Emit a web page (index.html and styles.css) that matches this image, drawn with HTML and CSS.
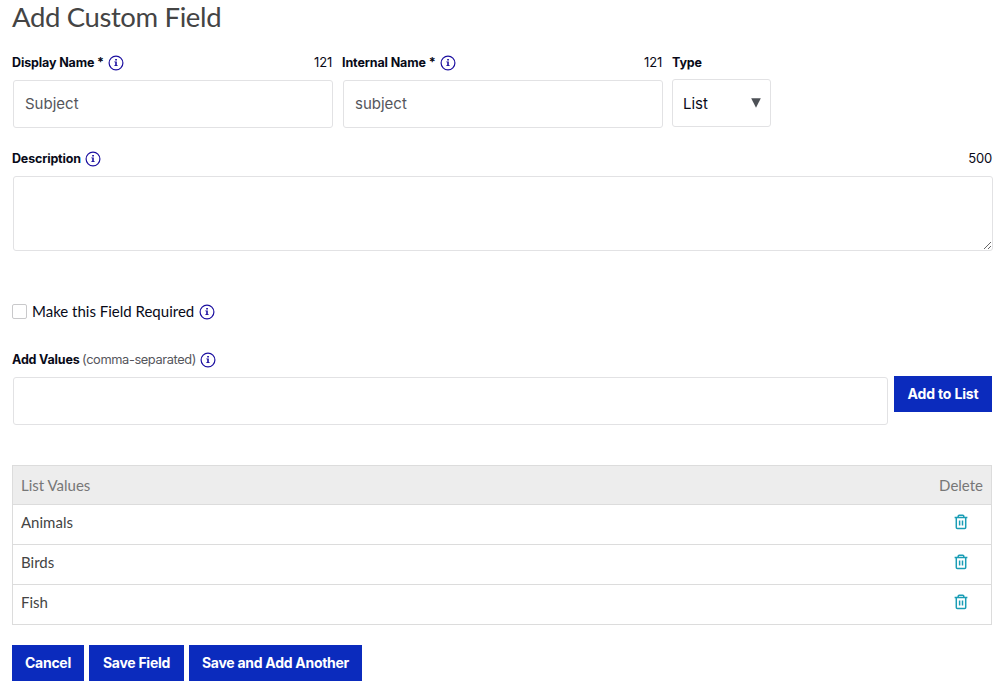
FILE: index.html
```html
<!DOCTYPE html>
<html lang="en">
<head>
<meta charset="utf-8">
<title>Add Custom Field</title>
<link rel="stylesheet" href="styles.css">
</head>
<body>
<svg class="defs" width="0" height="0" aria-hidden="true">
  <symbol id="info" viewBox="0 0 16 16">
    <circle cx="8" cy="8" r="6.9" fill="none" stroke="currentColor" stroke-width="1.2"/>
    <path d="M7.2 4h1.7v1.5H7.2zM6.3 6.5h2.5v3.8h.9v.8H6.3v-.8h.9V7.3h-.9z" fill="currentColor"/>
  </symbol>
  <symbol id="trash" viewBox="0 0 14 16">
    <path d="M.6 3.6h12.8M4.2 3.4V2.2q0-1 1-1h3.6q1 0 1 1v1.2M2.3 3.8v9.8q0 1 1 1h7.4q1 0 1-1V3.8M5.6 6.6v4.8M8.5 6.6v4.8" fill="none" stroke="currentColor" stroke-width="1.5"/>
  </symbol>
</svg>
<form class="page">
  <h1 class="title">Add Custom Field</h1>
  <div class="names">
    <div class="field">
      <div class="label-row"><label class="label display">Display Name *</label><svg class="info"><use href="#info"/></svg><span class="count">121</span></div>
      <input class="box" type="text" value="Subject">
    </div>
    <div class="field">
      <div class="label-row"><label class="label internal">Internal Name *</label><svg class="info"><use href="#info"/></svg><span class="count">121</span></div>
      <input class="box" type="text" value="subject">
    </div>
    <div class="type-field">
      <div class="label-row"><label class="label">Type</label></div>
      <div class="select"><span>List</span><svg class="arrow" viewBox="0 0 10 10"><path d="M.2.3h9.6L5 9.7z" fill="currentColor"/></svg></div>
    </div>
  </div>
  <div class="description">
    <div class="label-row"><label class="label">Description</label><svg class="info"><use href="#info"/></svg><span class="count wide">500</span></div>
    <textarea class="area"></textarea>
  </div>
  <div class="required"><span class="check"></span><span class="check-label">Make this Field Required</span><svg class="info"><use href="#info"/></svg></div>
  <div class="label-row"><label class="label">Add Values</label><span class="hint">(comma-separated)</span><svg class="info"><use href="#info"/></svg></div>
  <div class="add-row">
    <input class="box values" type="text">
    <button class="btn add" type="button">Add to List</button>
  </div>
  <div class="table">
    <div class="row head"><span>List Values</span><span>Delete</span></div>
    <div class="row"><span>Animals</span><svg class="trash"><use href="#trash"/></svg></div>
    <div class="row"><span>Birds</span><svg class="trash"><use href="#trash"/></svg></div>
    <div class="row"><span>Fish</span><svg class="trash"><use href="#trash"/></svg></div>
  </div>
  <div class="actions">
    <button class="btn cancel" type="button">Cancel</button>
    <button class="btn save" type="button">Save Field</button>
    <button class="btn another" type="button">Save and Add Another</button>
  </div>
</form>
</body>
</html>
```
FILE: styles.css
```css
* { box-sizing: border-box; }
body { margin: 0; background: #fff; color: #080a18; font-family: Lato, sans-serif; overflow: hidden; }
.defs { display: block; height: 0; }
.page { width: 992px; padding-left: 12px; }
.title { margin: 0; height: 51px; line-height: 34px; font-size: 27.5px; font-weight: 400; letter-spacing: -0.37px; color: #444; }
.names { display: flex; gap: 9px; }
.field { width: 321px; }
.type-field { width: 99px; }
.label-row { display: flex; align-items: center; height: 22px; font-family: Inter, sans-serif; font-size: 13px; white-space: nowrap; }
.label { font-weight: 700; font-size: 12.5px; letter-spacing: -0.17px; }
.display { letter-spacing: -0.13px; }
.internal { letter-spacing: -0.12px; }
.info { display: block; flex: none; width: 16px; height: 16px; margin: 2px 0 0 4.5px; color: #1c0fa0; }
.count { margin: 0 1px 0 auto; letter-spacing: -0.2px; }
.wide { margin-right: 0; }
.hint { margin-left: 2.5px; color: #55565c; font-size: 12.8px; letter-spacing: -0.38px; }
.box { display: block; width: 320px; height: 48px; margin: 7px 0 0 1px; padding: 0 11px 1px; border: 1px solid #e2e2e4; border-radius: 3px; outline: 0; background: #fff; color: #55565c; font: 15px Inter, sans-serif; }
.select { display: flex; align-items: center; justify-content: space-between; height: 48px; margin-top: 6px; padding: 0 9px 0 10px; border: 1px solid #e2e2e4; border-radius: 3px; font: 15px Inter, sans-serif; }
.arrow { width: 10px; height: 10px; color: #4d5156; }
.description { margin-top: 19px; }
.area { display: block; width: 980px; height: 75px; margin: 7px 0 0 1px; border: 1px solid #e2e2e4; border-radius: 3px; outline: 0; background: #fff; resize: both; }
.required { display: flex; align-items: center; height: 20px; margin: 50px 0 27px; font-size: 15px; }
.check { width: 15px; height: 15px; margin-right: 5px; border: 1px solid #c9c9cb; border-radius: 2px; }
.add-row { display: flex; gap: 6px; align-items: flex-start; padding-top: 6px; }
.values { width: 875px; margin-top: 1px; }
.btn { height: 36px; padding: 0 0 2px; border: 0; background: #0b2bbd; color: #fff; font: 700 14px Inter, sans-serif; letter-spacing: -0.28px; white-space: nowrap; }
.add { width: 98px; letter-spacing: -0.16px; }
.table { margin-top: 40px; border: 1px solid #dcdcdc; font-size: 15px; color: #444; }
.row { display: flex; justify-content: space-between; height: 40px; padding: 0 8px; line-height: 34px; border-top: 1px solid #dcdcdc; }
.head { height: 38px; line-height: 38px; border-top: 0; background: #ededed; color: #777; }
.trash { width: 14px; height: 16px; margin: 9px 15px 0 0; color: #1a9db5; }
.actions { display: flex; gap: 5px; margin-top: 20px; }
.cancel { width: 72px; }
.save { width: 95px; }
.another { width: 173px; }
```
